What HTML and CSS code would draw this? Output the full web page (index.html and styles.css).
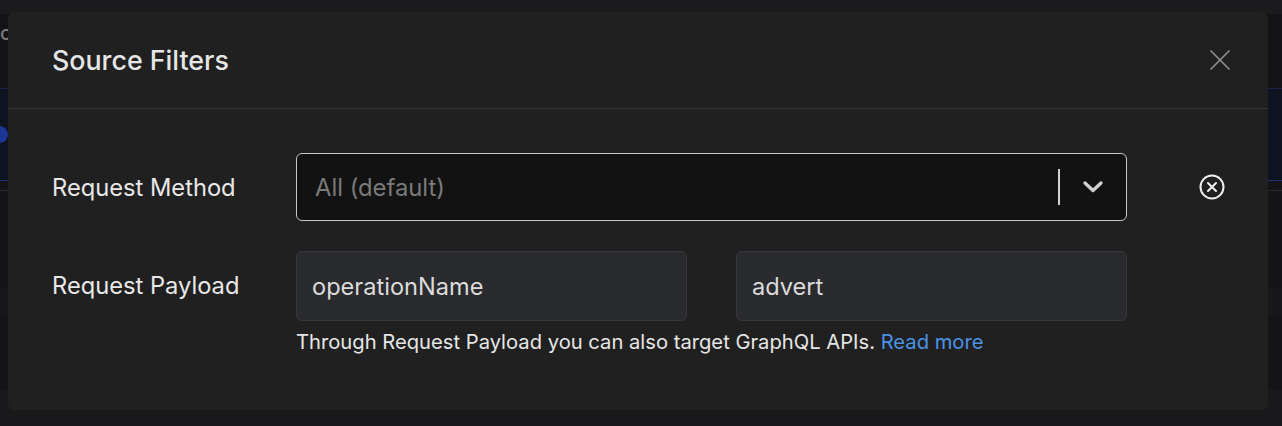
FILE: index.html
```html
<!DOCTYPE html>
<html lang="en">
<head>
<meta charset="utf-8">
<title>Source Filters</title>
<link rel="stylesheet" href="styles.css">
</head>
<body>
<div class="page">
  <div class="topbar"></div>
  <div class="toolbar"><span class="crumb">c</span></div>
  <div class="selected-row"><span class="dot"></span></div>
  <div class="row-line"></div>
  <div class="rest"></div>
  <div class="row-alt"></div>
  <div class="rest2"></div>
  <div class="footer"></div>
</div>

<div class="modal" role="dialog" aria-label="Source Filters">
  <header class="modal-header">
    <h2 class="modal-title">Source Filters</h2>
    <button class="close-btn" aria-label="Close">
      <svg width="22" height="22" viewBox="0 0 22 22"><path d="M1.5 1.5 L20.5 20.5 M20.5 1.5 L1.5 20.5" stroke="#8d8d8d" stroke-width="1.7" fill="none"/></svg>
    </button>
  </header>
  <div class="modal-body">
    <div class="filter-row">
      <label class="filter-label">Request Method</label>
      <div class="filter-control">
        <div class="select">
          <span class="select-value">All (default)</span>
          <span class="select-sep"></span>
          <span class="select-arrow">
            <svg width="22" height="14" viewBox="0 0 22 14"><path d="M3 3 L11 10.5 L19 3" stroke="#d0d0d0" stroke-width="3.4" fill="none" stroke-linecap="round" stroke-linejoin="round"/></svg>
          </span>
        </div>
      </div>
      <button class="clear-btn" aria-label="Clear">
        <svg width="26" height="26" viewBox="0 0 26 26"><circle cx="13" cy="13" r="11.5" stroke="#f0f0f0" stroke-width="2" fill="none"/><path d="M9 9 L17 17 M17 9 L9 17" stroke="#f0f0f0" stroke-width="2" stroke-linecap="round"/></svg>
      </button>
    </div>
    <div class="filter-row payload">
      <label class="filter-label">Request Payload</label>
      <div class="filter-control">
        <div class="pair">
          <div class="input">operationName</div>
          <div class="input">advert</div>
        </div>
        <p class="hint">Through Request Payload you can also target GraphQL APIs. <a href="#" class="link">Read more</a></p>
      </div>
      <span class="clear-spacer"></span>
    </div>
  </div>
</div>
</body>
</html>
```
FILE: styles.css
```css
* { box-sizing: border-box; }
html, body { margin: 0; padding: 0; }
body {
  width: 1282px;
  height: 426px;
  overflow: hidden;
  background: #141416;
  font-family: Inter, Roboto, "Liberation Sans", sans-serif;
  position: relative;
}
.page { display: flex; flex-direction: column; height: 426px; }
.topbar { height: 14px; background: #1b1b1d; }
.toolbar { height: 74px; background: #131315; position: relative; }
.crumb {
  position: absolute; left: 0; top: 8px; line-height: 22px;
  color: #7a7a7a; font-size: 20px; font-weight: 500;
}
.selected-row {
  height: 93px;
  background: #0e1322;
  border-top: 1px solid #17214a;
  border-bottom: 1px solid #1c2e7a;
  position: relative;
}
.dot {
  position: absolute; left: -9px; top: 37px;
  width: 17px; height: 17px; border-radius: 50%; background: #1d3593;
}
.row-line { height: 10px; border-bottom: 1px solid #2a2a2c; background: #141416; }
.rest { height: 97px; background: #141416; }
.row-alt { height: 28px; background: #18181a; }
.rest2 { height: 74px; background: #141416; }
.footer { flex: 1; background: #19191b; }

.modal {
  position: absolute;
  left: 8px; top: 12px;
  width: 1260px; height: 398px;
  background: #202020;
  border-radius: 7px;
  color: #e4e4e4;
}
.modal-header {
  height: 97px;
  border-bottom: 1px solid #353535;
  display: flex; align-items: center; justify-content: space-between;
  padding: 0 37px 0 44px;
}
.modal-title { margin: 0; font-size: 26.8px; font-weight: 500; color: #e6e6e6; padding-bottom: 1px; }
.close-btn { background: none; border: 0; padding: 0; width: 22px; height: 22px; display: block; }
.close-btn svg { display: block; }

.modal-body { padding: 44px 44px 0 44px; display: flex; flex-direction: column; gap: 30px; }
.filter-row { display: flex; align-items: center; }
.filter-row.payload { align-items: flex-start; }
.filter-label { width: 244px; flex: none; font-size: 23.7px; color: #e8e8e8; }
.payload .filter-label { line-height: 70px; }
.filter-control { width: 831px; flex: none; }
.select {
  height: 68px;
  background: #121212;
  border: 1px solid #c9c9c9;
  border-radius: 6px;
  display: flex; align-items: center;
  padding-left: 18px;
}
.select-value { flex: 1; font-size: 23.8px; color: #7a7a7a; }
.select-sep { width: 2px; height: 36px; background: #d4d4d4; }
.select-arrow { width: 66px; display: flex; justify-content: center; align-items: center; }
.select-arrow svg { display: block; }
.clear-btn { margin-left: 72px; width: 26px; height: 26px; background: none; border: 0; padding: 0; }
.clear-btn svg { display: block; }
.clear-spacer { width: 98px; flex: none; }

.pair { display: flex; gap: 49px; }
.input {
  flex: 1;
  height: 70px;
  background: #2a2b2f;
  border: 1px solid #37383c;
  border-radius: 6px;
  padding-left: 15px;
  display: flex; align-items: center;
  font-size: 23.6px; color: #dcdcdc;
}
.hint { margin: 9px 0 0 0; font-size: 20.2px; color: #e6e6e6; line-height: 24px; }
.link { color: #4b93e6; text-decoration: none; }
```
